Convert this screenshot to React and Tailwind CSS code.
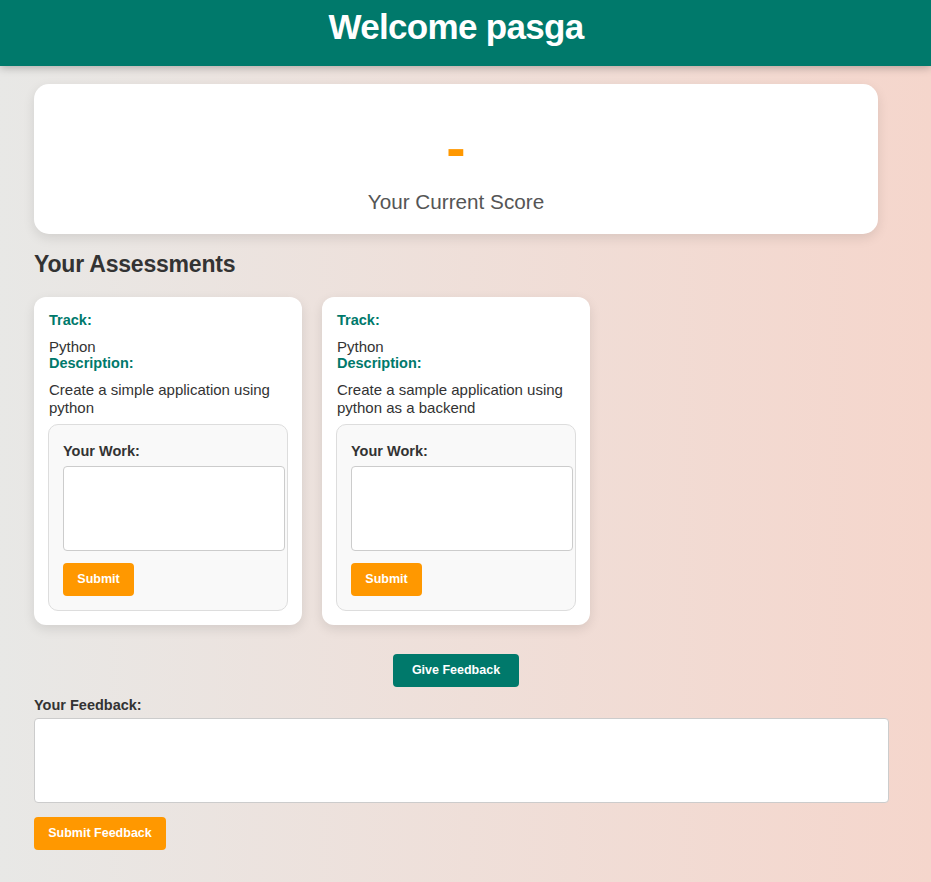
import React from "react";

function AssessmentCard({ description }) {
  return (
    <div className="w-[268px] bg-white rounded-[12px] shadow-[0_4px_12px_rgba(0,0,0,0.1)] px-[14px] pt-[15px] pb-[14px]">
      <div className="pl-[1px] text-[14.5px] leading-[17px] font-bold text-[#00796b] mb-[8.5px]">Track:</div>
      <div className="pl-[1px] text-[15px] leading-[17px] text-[#333]">Python</div>
      <div className="pl-[1px] text-[14.5px] leading-[17px] font-bold text-[#00796b] mb-[9.5px]">Description:</div>
      <div className="pl-[1px] text-[15px] leading-[17.5px] text-[#333]">{description}</div>
      <div className="mt-[8px] w-[240px] border border-[#ddd] bg-[#f9f9f9] rounded-[10px] px-[14px] pt-[18px] pb-[14px]">
        <div className="text-[14.5px] leading-[17px] font-bold text-[#333] mb-[6px]">Your Work:</div>
        <textarea className="block w-[222px] h-[85px] bg-white border border-[#ccc] rounded-[4px] resize-none"></textarea>
        <button className="mt-[12px] w-[71px] h-[33px] bg-[#ff9800] rounded-[4px] text-white text-[12.5px] font-bold">
          Submit
        </button>
      </div>
    </div>
  );
}

export default function App() {
  return (
    <div className="min-h-screen bg-gradient-to-r from-[#e8e8e6] to-[#f5d6cc] font-['Liberation_Sans',Arial,sans-serif] text-[#333]">
      <header className="h-[66px] bg-[#00796b] shadow-[0_2px_8px_rgba(0,0,0,0.25)] relative">
        <h1 className="w-[912px] pt-[7px] text-center text-white text-[35px] leading-[40px] font-bold tracking-[-0.7px]">
          Welcome pasga
        </h1>
      </header>
      <main className="w-[912px] px-[34px] pt-[18px] pb-[32px]">
        <div className="h-[150px] bg-white rounded-[15px] shadow-[0_4px_12px_rgba(0,0,0,0.1)] flex flex-col items-center pt-[40px]">
          <div className="text-[58px] leading-[48px] font-bold text-[#ff9800]">-</div>
          <div className="mt-[18px] text-[20.7px] leading-[23px] text-[#555]">Your Current Score</div>
        </div>
        <h2 className="mt-[17px] mb-[19px] text-[23px] leading-[27px] font-bold text-[#333] tracking-[-0.2px]">
          Your Assessments
        </h2>
        <div className="flex gap-[20px] items-start">
          <AssessmentCard description="Create a simple application using python" />
          <AssessmentCard description="Create a sample application using python as a backend" />
        </div>
        <div className="mt-[29px] flex justify-center">
          <button className="w-[126px] h-[33px] bg-[#00796b] rounded-[4px] text-white text-[12.5px] font-bold">
            Give Feedback
          </button>
        </div>
        <div className="mt-[10px] mb-[4px] text-[14.5px] leading-[17px] font-bold text-[#333]">Your Feedback:</div>
        <textarea className="block w-[855px] h-[85px] bg-white border border-[#ccc] rounded-[4px] resize-none"></textarea>
        <button className="mt-[14px] w-[132px] h-[33px] bg-[#ff9800] rounded-[4px] text-white text-[12.5px] font-bold">
          Submit Feedback
        </button>
      </main>
    </div>
  );
}
